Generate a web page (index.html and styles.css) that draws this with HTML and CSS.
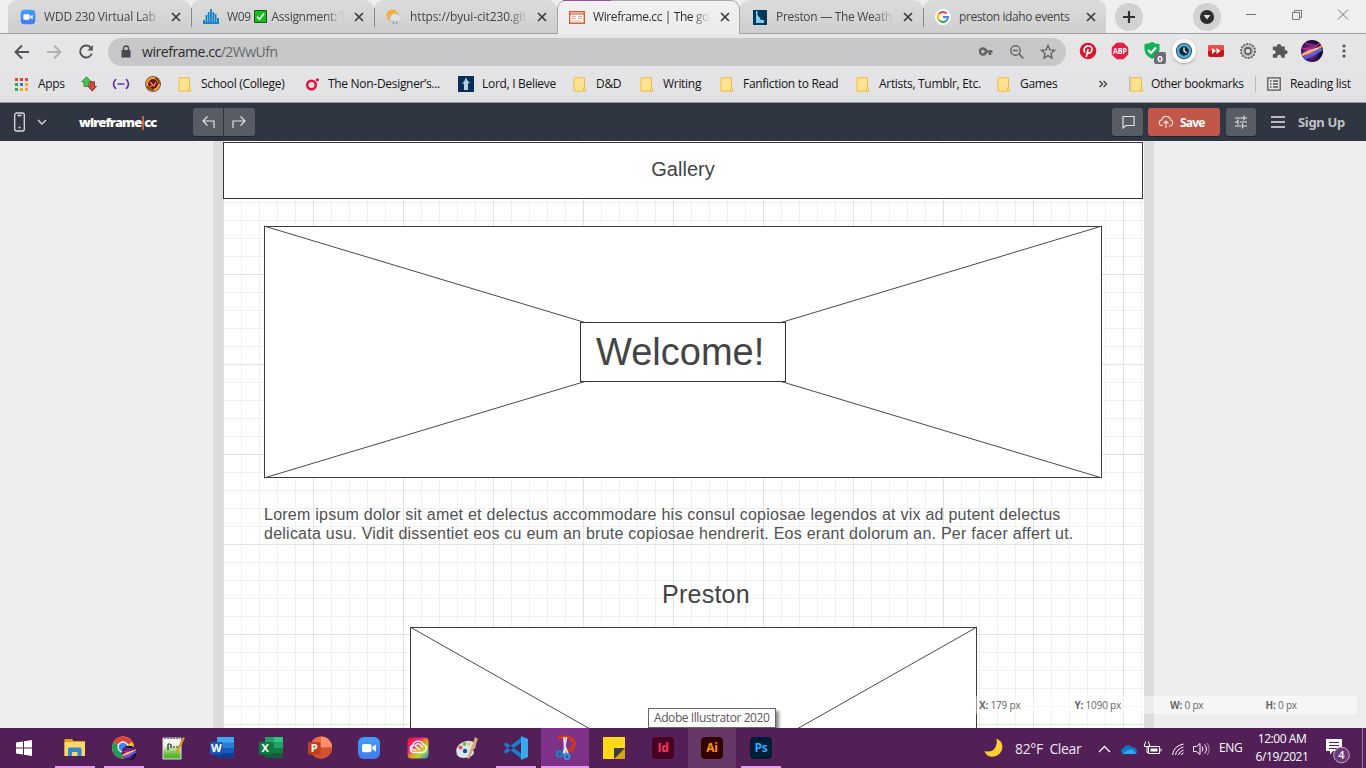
FILE: index.html
```html
<!DOCTYPE html>
<html lang="en">
<head>
<meta charset="utf-8">
<title>Wireframe.cc | The go-to free wireframing tool</title>
<link rel="stylesheet" href="styles.css">
</head>
<body>
<svg class="defs" width="0" height="0">
  <defs>
    <symbol id="x" viewBox="0 0 10 10"><path d="M1 1l8 8M9 1l-8 8" fill="none" stroke="currentColor" stroke-width="1.7"/></symbol>
    <symbol id="folder" viewBox="0 0 14 15"><path d="M1 .8h10.500v9.700l1 .8v2.900H1z" fill="#ffe391" stroke="#e9bd43"/><path d="M10.500 14v-3l1-1.200" fill="none" stroke="#e9bd43"/></symbol>
    <linearGradient id="blue" x2="0" y2="1"><stop stop-color="#3da0fb"/><stop offset="1" stop-color="#4479ed"/></linearGradient>
    <symbol id="zoom" viewBox="0 0 24 24"><rect x="1" y="1" width="22" height="22" rx="6" fill="url(#blue)"/><rect x="5" y="8" width="9.500" height="8.200" rx="1.800" fill="#fff"/><path d="M15.500 10.800L19 8.500v7.200l-3.500-2.400z" fill="#fff"/></symbol>
    <radialGradient id="orb" cx=".4" cy=".55"><stop stop-color="#f5b4a0"/><stop offset=".3" stop-color="#b03058"/><stop offset=".7" stop-color="#421a6c"/><stop offset="1" stop-color="#150b30"/></radialGradient>
    <symbol id="avatar" viewBox="0 0 22 22"><circle cx="11" cy="11" r="11" fill="url(#orb)"/><path d="M1 15Q10 13 21 6" stroke="#fb8b45" stroke-width="2.500" fill="none"/><path d="M3 18Q12 15 21 9" stroke="#4d62ed" stroke-width="3" fill="none"/><path d="M4 3Q12 6 16 5M1 8Q10 11 19 3" stroke="#b22fa2" stroke-width="1.200" fill="none"/><path d="M2 14Q10 10 17 8" stroke="#ffeade" stroke-width="1.300" fill="none"/></symbol>
    <linearGradient id="rainbow" x2="1" y2="1"><stop stop-color="#e8122a"/><stop offset=".35" stop-color="#ee2882"/><stop offset=".5" stop-color="#f08a24"/><stop offset=".7" stop-color="#b9d92b"/><stop offset="1" stop-color="#2986df"/></linearGradient>
    <linearGradient id="npp" x2="0" y2="1"><stop stop-color="#fff"/><stop offset=".35" stop-color="#eef7df"/><stop offset=".8" stop-color="#5dbb2e"/><stop offset="1" stop-color="#4db12c"/></linearGradient>
  </defs>
</svg>

<header class="browser">
  <div class="tabs">
    <div class="tab"><svg class="fav"><use href="#zoom"/></svg><span class="title t1">WDD 230 Virtual Lab -</span><svg class="close"><use href="#x"/></svg></div>
    <div class="tab line"><svg class="fav" viewBox="0 0 16 16"><path d="M0 15V11h2v4zM2.500 15V6h1.800v9zM4.800 15V3h1.800v12zM7.100 15V0h1.800v15zM9.400 15V3h1.800v12zM11.700 15V5h1.800v10zM14 15V9h2v6z" fill="#1a82c7"/><path d="M0 13h16v2H0z" fill="#1a82c7"/></svg><span class="title t2">W09 <svg class="check" viewBox="0 0 13 13"><path d="M.5.5h12v12H.5z" fill="#17bd1d" stroke="#125c14"/><path d="M3 6.700l2.400 2.500L10 3.500" fill="none" stroke="#fff" stroke-width="1.600"/></svg> Assignment: T</span><svg class="close"><use href="#x"/></svg></div>
    <div class="tab line"><svg class="fav" viewBox="0 0 16 16"><circle cx="6.500" cy="6.500" r="5" fill="#fbb53d" stroke="#f6a421" stroke-dasharray="2 1" stroke-width="2"/><path d="M5 12a3 3 0 010-5 4 4 0 017-1 3.200 3.200 0 012 6z" fill="#dfe3e6" stroke="#a9b2bb" stroke-width=".5"/><path d="M8 13l-1 2M11 13l-1 2" stroke="#4991c4"/></svg><span class="title t3">https://byui-cit230.gith</span><svg class="close"><use href="#x"/></svg></div>
    <div class="tab active"><svg class="fav" viewBox="0 0 16 16"><path d="M.7 2.700h14.600v11.600H.7z" fill="#fff" stroke="#df5a34" stroke-width="1.400"/><path d="M1 5h14" stroke="#df5a34" stroke-width="1.200"/><path d="M3 7.500h4M3 9.500h4M3 12h9M9 7.500h4M9 9.500h4" stroke="#efa98f"/></svg><span class="title t4">Wireframe.cc | The go-</span><svg class="close"><use href="#x"/></svg></div>
    <div class="tab"><svg class="fav" viewBox="0 0 16 16"><path d="M1 1h14v15H1z" fill="#06365c"/><path d="M4 2h1.500v4L7.500 8.500 9 11h3v3H4z" fill="#7bd2ec"/></svg><span class="title t5">Preston — The Weathe</span><svg class="close"><use href="#x"/></svg></div>
    <div class="tab line"><svg class="fav" viewBox="0 0 16 16"><circle cx="8" cy="8" r="8" fill="#fff"/><g fill="none" stroke-width="2"><path d="M11.600 4.600A5 5 0 004 5" stroke="#ea4335"/><path d="M4 5a5 5 0 000 6" stroke="#fbbc05"/><path d="M4 11a5 5 0 007.300.700" stroke="#34a853"/><path d="M11.300 11.700A5 5 0 0013 8H8" stroke="#4285f4"/></g></svg><span class="title t6">preston idaho events</span><svg class="close"><use href="#x"/></svg></div>
    <svg class="newtab" viewBox="0 0 28 28"><circle cx="14" cy="14" r="14" fill="#d1d1d2"/><path d="M14 8v12M8 14h12" stroke="#303030" stroke-width="2.200"/></svg>
    <svg class="search" viewBox="0 0 28 28"><circle cx="14" cy="14" r="14" fill="#d1d1d2"/><circle cx="14" cy="14" r="7" fill="#2b2c2e"/><path d="M10.500 12h7L14 16.500z" fill="#ddd"/></svg>
    <svg class="winctl" viewBox="0 0 104 14"><path d="M0 7.500h10M46.500 5.500h7v7h-7zM48.500 5.500v-2h7v7h-2M92 2.500l10 10M102 2.500l-10 10" fill="none" stroke="#777"/></svg>
  </div>
  <div class="toolbar">
    <svg class="nav" viewBox="0 0 88 20" fill="none" stroke="#515456" stroke-width="1.900"><path d="M15 10H2M8 3.500L1.500 10 8 16.500"/><path d="M33 10h13M40 3.500l6.500 6.500-6.500 6.500" stroke="#b0b1b3"/><path d="M77 6A6 6 0 1077.800 11.500" /><path d="M78.800 3v5.500h-5.500z" fill="#515456" stroke="none"/></svg>
    <div class="omnibox">
      <svg width="10" height="14" viewBox="0 0 10 14"><path d="M.5 5h9v7.500h-9z" fill="#47494c"/><path d="M2.500 5V3.500a2.500 2.500 0 015 0V5" fill="none" stroke="#47494c" stroke-width="1.400"/></svg>
      <span class="url">wireframe.cc<i>/2WwUfn</i></span>
      <svg class="oicons" viewBox="0 0 80 16" fill="none" stroke="#5f6164"><circle cx="5" cy="7.500" r="3" stroke-width="2.400"/><path d="M8 7.500h6.500M12 7.500v3.500" stroke-width="2.600"/><circle cx="37.500" cy="6.500" r="4.700" stroke-width="1.400"/><path d="M35 6.500h5M41 10l4.500 4.500" stroke-width="1.500"/><path d="M70 1.500l1.900 4.400 4.700.4-3.600 3.100 1.100 4.700-4.100-2.500-4.100 2.500L67 9.400l-3.600-3.100 4.700-.4z" stroke-width="1.300"/></svg>
    </div>
    <div class="exts">
      <svg viewBox="0 0 18 18"><circle cx="9" cy="9" r="8.300" fill="#d9162c"/><path d="M6 10.500C3.500 7 6.500 3.800 9.300 3.900c3 0 4.500 2.300 3.500 4.900-1 2.700-3.500 3-4.200 1.600M9.200 7l-2 8" fill="none" stroke="#fff" stroke-width="1.600"/></svg>
      <svg viewBox="0 0 18 18"><path d="M5.500.7h7L17.300 5.500v7l-4.800 4.800h-7L.7 12.500v-7z" fill="#e61e43"/><text x="9" y="12" text-anchor="middle" fill="#fff" font-size="8.500" font-weight="700" textLength="14" lengthAdjust="spacingAndGlyphs">ABP</text></svg>
      <svg viewBox="0 0 18 18" class="shieldicon"><path d="M9 0q4 2 7.500 2v6q-1 6-7.500 9Q2.500 14 1.500 8V2Q5 2 9 0z" fill="#0fb456"/><path d="M5 8l3 3 5-5.500" fill="none" stroke="#fff" stroke-width="2"/><rect x="11" y="10" width="12" height="12" rx="2" fill="#6c6c7a"/><text x="17" y="19.500" text-anchor="middle" fill="#fff" font-size="9.500" font-weight="700">0</text></svg>
      <svg viewBox="0 0 18 18" class="ring"><circle cx="9" cy="9" r="12" fill="#fff"/><circle cx="9" cy="9" r="6.800" fill="#132635" stroke="#1d303e" stroke-width="2.400"/><circle cx="9" cy="9" r="6" fill="none" stroke="#44b3e4" stroke-width="2.500"/><path d="M9 5.500V9l2.500 2" fill="none" stroke="#fff" stroke-width="1.300"/></svg>
      <svg viewBox="0 0 18 18"><rect x="1" y="3" width="16" height="12" rx="2.500" fill="#c91219"/><path d="M1 9V5q0-2 2-2h12q2 0 2 2v3z" fill="#ec4c4d"/><path d="M5 6l4 3-4 3zM9.500 6l4 3-4 3z" fill="#fff"/></svg>
      <svg viewBox="0 0 18 18"><circle cx="9" cy="9" r="7" fill="#b4b4b4" stroke="#666" stroke-width="2" stroke-dasharray="2 1.100"/><circle cx="9" cy="9" r="5.500" fill="#aaa" stroke="#ddd"/><circle cx="9" cy="9" r="3" fill="#ddd" stroke="#555" stroke-width="1.300"/></svg>
      <svg viewBox="0 0 18 18"><path d="M2 5h4.500a2.300 2.300 0 114.500 0h4v4a2.200 2.200 0 110 4v4h-4a2.200 2.200 0 10-4 0H2v-4a2.200 2.200 0 100-4z" fill="#55585b" transform="translate(-1 0) scale(.92)"/></svg>
      <svg class="ava"><use href="#avatar"/></svg>
      <svg viewBox="0 0 18 18"><g fill="#515355"><circle cx="8" cy="4" r="1.600"/><circle cx="8" cy="9" r="1.600"/><circle cx="8" cy="14" r="1.600"/></g></svg>
    </div>
  </div>
  <nav class="bookmarks">
    <a><svg viewBox="0 0 15 15" class="apps"><path d="M1 1h3v3H1zM6 1h3v3H6zM11 1h3v3h-3z" fill="#df4538"/><path d="M1 6h3v3H1zM1 11h3v3H1z" fill="#37a458"/><path d="M6 6h3v3H6z" fill="#3b78db"/><path d="M11 6h3v3h-3zM6 11h3v3H6zM11 11h3v3h-3z" fill="#eda52a"/></svg><span>Apps</span></a>
    <a><svg viewBox="0 0 16 16"><path d="M5.500.8l4.700 5H8v4.500H3V5.800H.8z" fill="#49c653" stroke="#167c28" stroke-width=".8"/><path d="M9 5.700h4.500v4.500h2l-4.200 5-4.500-5H9z" fill="#d94a44" stroke="#942321" stroke-width=".8"/></svg></a>
    <a><svg viewBox="0 0 18 16" class="wide"><path d="M4 3Q-1 8 4 13M14 3q5 5 0 10M5.500 8h7" fill="none" stroke="#6930a0" stroke-width="1.700"/></svg></a>
    <a><svg viewBox="0 0 16 16"><circle cx="8" cy="8" r="7.800" fill="#2c150b"/><circle cx="8" cy="8" r="6" fill="none" stroke="#eda32f" stroke-width="2.600"/><circle cx="8" cy="8" r="4.600" fill="#771111"/><path d="M2 10q2 4 7 4M10 2q4 1 4 6" stroke="#7b3c10" stroke-width="1.500" fill="none"/><path d="M5 6l4 4 2-4M5 11l3-2" stroke="#d98b80" stroke-width="1.300" fill="none"/></svg></a>
    <a><svg class="f"><use href="#folder"/></svg><span>School (College)</span></a>
    <a><svg viewBox="0 0 16 16"><circle cx="6.500" cy="9" r="4.300" fill="none" stroke="#dc143c" stroke-width="2.500"/><circle cx="12.500" cy="3.800" r="1.600" fill="#dc143c"/></svg><span class="non">The Non-Designer’s...</span></a>
    <a><svg viewBox="0 0 16 16"><path d="M0 0h16v16H0z" fill="#0a2e57"/><path d="M8 2q1 0 1 2l3 3-2 .500V14H6V7.500L4 8l3-4q0-2 1-2z" fill="#b6d0e2"/></svg><span>Lord, I Believe</span></a>
    <a><svg class="f"><use href="#folder"/></svg><span>D&amp;D</span></a>
    <a><svg class="f"><use href="#folder"/></svg><span>Writing</span></a>
    <a><svg class="f"><use href="#folder"/></svg><span>Fanfiction to Read</span></a>
    <a><svg class="f"><use href="#folder"/></svg><span>Artists, Tumblr, Etc.</span></a>
    <a><svg class="f"><use href="#folder"/></svg><span>Games</span></a>
    <a><svg width="10" height="10" viewBox="0 0 10 10"><path d="M1.500 2l3 3-3 3M5.500 2l3 3-3 3" fill="none" stroke="#444" stroke-width="1.400"/></svg></a>
    <a class="sep"><svg class="f"><use href="#folder"/></svg><span class="other">Other bookmarks</span></a>
    <a class="sep read"><svg viewBox="0 0 14 14" class="rl"><path d="M.8.800h12.400v12.400H.8zM3 4h1.500M3 7h1.500M3 10h1.500M6 4h5M6 7h5M6 10h5" fill="none" stroke="#535659" stroke-width="1.300"/></svg><span>Reading list</span></a>
  </nav>
</header>

<div class="appbar">
  <svg class="phone" viewBox="0 0 36 20" fill="none" stroke="#dcdde0"><rect x="1.700" y="1" width="9.600" height="18" rx="2" stroke-width="1.300"/><path d="M4.500 3.500h4M5.500 15.500h2" stroke-width="1.400"/><path d="M25 8l4 4 4-4" stroke-width="1.300"/></svg>
  <span class="logo">wireframe<b></b>cc</span>
  <div class="undo">
    <svg viewBox="0 0 30 28"><path d="M21 20v-7H10M14.500 8.500L10 13l4.500 4.500" /></svg>
    <svg viewBox="0 0 30 28"><path d="M8.500 20v-7H20M16 8.500l4.500 4.500-4.500 4.500"/></svg>
  </div>
  <svg class="btn chat" viewBox="0 0 30 28"><path d="M10.500 8.500h11v9h-8l-3 2.500z"/></svg>
  <div class="save"><svg viewBox="0 0 16 14" fill="none" stroke="#ffe3dd" stroke-width="1.100"><path d="M5 10.500H3.500A2.800 2.800 0 013.700 5a4.600 4.600 0 018.900-.3A3.300 3.300 0 0112 11h-1.200M8 13V6.500M5.500 8.500L8 6l2.500 2.500"/></svg><span>Save</span></div>
  <svg class="btn settings" viewBox="0 0 30 28"><path d="M9 10h12M9 14h3M14 14h7M9 18h6M17 18h4M18 7.500v5M12 11.500v5M16.500 15.500v5"/></svg>
  <svg class="menu" viewBox="0 0 14 12"><path d="M0 1h14M0 6h14M0 11h14" stroke="#e8e8ea" stroke-width="1.400"/></svg>
  <span class="signup">Sign Up</span>
</div>

<main class="workspace">
  <div class="sheet">
    <div class="node gallery">Gallery</div>
    <svg class="node hero" viewBox="0 0 838 252"><rect x=".5" y=".5" width="837" height="251"/><path d="M0 0l838 252M838 0L0 252"/></svg>
    <div class="node welcome">Welcome!</div>
    <p class="node para"><span>Lorem ipsum dolor sit amet et delectus accommodare his consul copiosae legendos at vix ad putent delectus</span><br><span>delicata usu. Vidit dissentiet eos cu eum an brute copiosae hendrerit. Eos erant dolorum an. Per facer affert ut.</span></p>
    <div class="node preston">Preston</div>
    <svg class="node photo" viewBox="0 0 567 321"><rect x=".5" y=".5" width="566" height="320"/><path d="M0 0l567 321M567 0L0 321"/></svg>
  </div>
  <div class="status"><span><b>X:</b> 179 px</span><span><b>Y:</b> 1090 px</span><span><b>W:</b> 0 px</span><span><b>H:</b> 0 px</span></div>
  <div class="tooltip"><span>Adobe Illustrator 2020</span></div>
</main>

<footer class="taskbar">
  <div class="apps-row">
    <div class="task first"><svg viewBox="0 0 24 24"><path d="M4 6.500l7-1v6H4zM12 5.300L20 4v7.500h-8zM4 12.500h7v6l-7-1zM12 12.500h8V20l-8-1.200z" fill="#fff"/></svg></div>
    <div class="task run"><svg viewBox="0 0 24 24"><path d="M1.500 3H9l1.500 2H22v15H1.500z" fill="#e9a21f"/><path d="M1.500 6H22v14H1.500z" fill="#ffd668"/><path d="M5 20v-7q0-1.500 1.500-1.500h10.500q1.500 0 1.500 1.500v7h-4v-4h-5.500v4z" fill="#2d8ccf"/></svg></div>
    <div class="task run"><svg viewBox="0 0 24 24"><circle cx="11" cy="11.500" r="11" fill="#f7c830"/><path d="M11 11.500L1.500 6A11 11 0 0120.500 6z" fill="#dc4437"/><path d="M1.500 6A11 11 0 0010 22.500l4-8z" fill="#239b57"/><circle cx="11" cy="11" r="5" fill="#3f83e8" stroke="#f2f2f2" stroke-width="1.300"/><svg x="9.500" y="9.500" width="15" height="15"><use href="#avatar"/></svg></svg></div>
    <div class="task"><svg viewBox="0 0 24 24"><path d="M2 2h18v21H2z" fill="url(#npp)" stroke="#ddd"/><path d="M3 2h16" stroke="#777" stroke-width="2" stroke-dasharray="2 1"/><path d="M7 8v6M10 8v4M12 11h2M15 11h3M7 8h2" stroke="#222" stroke-width="1.200"/><path d="M22 1l2 1-7 14-2 2v-3z" fill="#d99727"/></svg></div>
    <div class="task"><svg viewBox="0 0 24 24"><path d="M7 1h17v6H7z" fill="#41a5ee"/><path d="M7 6.500h17V12H7z" fill="#2b7cd3"/><path d="M7 12h17v5H7z" fill="#185abd"/><path d="M7 17h17v5H7z" fill="#103f91"/><rect y="6" width="12.500" height="12.500" rx="1" fill="#185abd"/><text x="6.200" y="15.800">W</text></svg></div>
    <div class="task"><svg viewBox="0 0 24 24"><path d="M6 1h18v21H6z" fill="#107c41"/><path d="M6 1h9v5.500H6z" fill="#21a366"/><path d="M15 1h9v5.500h-9z" fill="#33c481"/><path d="M15 6.500h9V12h-9z" fill="#21a366"/><path d="M6 17h18v5H6z" fill="#185c37"/><rect y="6" width="12.500" height="12.500" rx="1" fill="#107c41"/><text x="6.200" y="15.800">X</text></svg></div>
    <div class="task"><svg viewBox="0 0 24 24"><circle cx="13" cy="11.500" r="11" fill="#ed6c47"/><path d="M13 .500a11 11 0 0111 11H13z" fill="#ff8f6b"/><path d="M2 11.500h22a11 11 0 01-22 0z" fill="#d35230"/><rect y="6" width="12.500" height="12.500" rx="1" fill="#c43e1c"/><text x="6.200" y="15.800">P</text></svg></div>
    <div class="task"><svg><use href="#zoom"/></svg></div>
    <div class="task"><svg viewBox="0 0 24 24"><rect x="1.500" y="1.500" width="21" height="21" rx="4" fill="url(#rainbow)"/><g fill="none" stroke="#fff" stroke-width="1.400"><path d="M7.500 16.500h9a4 4 0 001-7.800A5.600 5.600 0 007 8.800a4 4 0 00.500 7.700z"/><path d="M14 14.300l-4.500-4.300a2.300 2.300 0 10-1.500 4h2.500M9.500 9q3-2.500 5.500.5l2 2.300"/></g></svg></div>
    <div class="task"><svg viewBox="0 0 24 24"><path d="M2 19Q-1 11 7 6.500q9-4 13 1 2 4-2 6l1 3q-1 4-6 5Q5 23 2 19z" fill="#d9e7f0"/><circle cx="5.500" cy="11.500" r="2" fill="#e05844"/><circle cx="9.500" cy="8" r="1.800" fill="#64b548"/><circle cx="14" cy="8" r="1.800" fill="#eec246"/><circle cx="10" cy="15" r="2.200" fill="#1d4b8b"/><path d="M20 1l3 2-2 5-7 15-2-1 6-15z" fill="#d8aa75"/></svg></div>
    <div class="task run"><svg viewBox="0 0 24 24"><path d="M0 8l2-1.500L18 18v5L1 10zM0 16l2 1.500L18 6V1L1 14z" fill="#1581ca"/><path d="M17 0l7 3v18l-7 3z" fill="#36a9ef"/></svg></div>
    <div class="task run current"><svg viewBox="0 0 24 24"><path d="M5 2.500Q14-1 19 3.500T18 14l-4 1" fill="none" stroke="#c9381f" stroke-width="3.500"/><path d="M11 1l1 16M13.500 1l-3 17M12 10l3 8" stroke="#dfe1e8" stroke-width="1.700"/><circle cx="6.500" cy="18" r="2.800" fill="none" stroke="#1382cf" stroke-width="2"/><circle cx="14" cy="20.500" r="2.500" fill="none" stroke="#2c9ce2" stroke-width="2"/></svg></div>
    <div class="task"><svg viewBox="0 0 24 24"><path d="M1 1h22v11l-11 11H1z" fill="#fcd916"/><path d="M23 12v11H12z" fill="#d9a800"/><path d="M12 12h11L12 23z" fill="#3b3b3b"/></svg></div>
    <div class="task adobe id"><b>Id</b></div>
    <div class="task adobe ai"><b>Ai</b></div>
    <div class="task run adobe ps"><b>Ps</b></div>
  </div>
  <div class="tray">
    <svg class="moon" viewBox="0 0 20 20"><path d="M12.500.500q8 4 5.500 11.500Q14 20 6 18.500 2 17.500.5 13q8 2 11-4 2-4 1-8.500z" fill="#ffcf32"/></svg>
    <span class="weather">82°F&nbsp; Clear</span>
    <svg class="trayicons" viewBox="0 0 116 20" fill="none" stroke="#fff"><path d="M1 13l5.500-5.500L12 13" stroke-width="1.300"/><path d="M25 15a3.200 3.200 0 01.5-6 5 5 0 018.500-.5 4 4 0 014 6.500z" fill="#0d78ce" stroke="none"/><path d="M25 15q2-3 7-4.500 4-.5 6 4.500z" fill="#34a8eb" stroke="none"/><path d="M50.500 7.500h11v7h-11zM63 9.500v3M46.500 4.500v3h5v-3M47.500 4.500v-2M50.500 4.500v-2M49 7.500v6h1.500"/><path d="M52.500 9.500h7v3h-7z" fill="#fff" stroke="none"/><path d="M74.500 16Q75.500 7 85.500 5M77.500 16q1-6 8-8M80.500 16q1-3.500 5-5M83.500 16q0-1.500 2-2"/><path d="M95.500 7.500h3l3.500-3v11l-3.500-3h-3zM104 7.500q2 2.500 0 5M106.500 5.500q4 4.500 0 9"/><path d="M109 4q4.500 6 0 12" stroke="#ad91ae"/></svg>
    <span class="eng">ENG</span>
    <div class="clock"><span>12:00 AM</span><span>6/19/2021</span></div>
    <svg class="notif" viewBox="0 0 26 26"><path d="M1 1h16v12H8l-3 3.500V13H1z" fill="#fff"/><path d="M4 4.500h10M4 7.500h10M4 10.500h10" stroke="#522056" stroke-width="1.200"/><circle cx="16.500" cy="17" r="7.800" fill="#6c3974" stroke="#c4a8c8"/><text x="16.500" y="21" text-anchor="middle" fill="#fff" font-size="11" font-weight="600">4</text></svg>
    <i class="desk"></i>
  </div>
</footer>
</body>
</html>
```
FILE: styles.css
```css
* { box-sizing: border-box; }
body { margin: 0; width: 1366px; height: 768px; overflow: hidden; display: flex; flex-direction: column; font: 12px/16px "Open Sans", "Noto Sans", sans-serif; color: #222; }
svg { display: block; flex: none; overflow: visible; }
.defs { position: absolute; }
span { white-space: nowrap; }

.browser { height: 103px; background: linear-gradient(#e9e9ea, #e2e2e4); border-bottom: 1px solid #94959a; flex: none; }
.tabs { height: 34px; display: flex; padding-left: 8px; border-bottom: 1px solid #a0a0a2; background: #efeff0; }
.tab { width: 183px; height: 33px; padding: 0 10px 0 12px; display: flex; align-items: center; background: linear-gradient(#dcdcdd, #cececf); border-radius: 9px 9px 0 0; color: #454545; }
.tab.line { border-image: linear-gradient(transparent 25%, #888 25% 80%, transparent 80%) 1; border-left: 1px solid; padding-left: 11px; }
.tab.active { height: 34px; background: linear-gradient(#f1f1f2, #ebebec); border: 1px solid #a7a7a9; border-bottom: 0; color: #2e2e2e; padding: 0 9px 1px 11px; }
.tab.active::before { content: ""; position: absolute; left: 563px; top: 0; width: 48px; height: 1px; background: #9a4caa; }
.fav { width: 16px; height: 16px; margin-right: 8px; }
.title { flex: 1; min-width: 0; font-size: 12px; letter-spacing: -.15px; -webkit-mask-image: linear-gradient(90deg, #000 82%, transparent 98%); mask-image: linear-gradient(90deg, #000 82%, transparent 98%); }
.t1 { letter-spacing: -.18px; }
.t2 { letter-spacing: -.3px; }
.t3 { letter-spacing: -.12px; }
.t4 { letter-spacing: -.4px; }
.t5 { letter-spacing: -.3px; }
.t6 { letter-spacing: -.4px; -webkit-mask-image: none; mask-image: none; }
.check { display: inline-block; width: 13px; height: 13px; vertical-align: -2px; margin-right: 2px; }
.close { width: 10px; height: 10px; margin-left: 7px; color: #3a3a3a; }
.newtab { width: 28px; height: 28px; margin: 3px 0 0 9px; }
.search { width: 28px; height: 28px; margin: 3px 0 0 50px; }
.winctl { width: 104px; height: 14px; margin: 7px 0 0 25px; }

.toolbar { height: 36px; display: flex; align-items: center; padding-left: 14px; }
.nav { width: 88px; height: 20px; margin-right: 6px; }
.omnibox { width: 958px; height: 28px; border-radius: 14px; background: #c7c7c9; display: flex; align-items: center; padding: 0 8px 0 13px; }
.url { font-size: 14px; line-height: 20px; color: #2a2a2c; margin-left: 11px; flex: 1; letter-spacing: -.5px; }
.url { letter-spacing: -.45px; }
.url i { font-style: normal; color: #66676a; letter-spacing: -.5px; }
.oicons { width: 80px; height: 16px; }
.exts { display: grid; grid-template-columns: repeat(9, 32.1px); padding-left: 5px; width: 294px; }
.exts svg { width: 18px; height: 18px; margin-left: 8px; }
.exts .ava { width: 22px; height: 22px; margin: -2px 0 0 5px; }
.ring circle:first-child { filter: drop-shadow(0 1px 1px #aaa); }

.bookmarks { height: 28px; display: grid; align-items: center; color: #151515; grid-template-columns: 67px 31px 33px 32px 128px 152px 116px 67px 80px 136px 141px 101px 31px 126px 99px; padding-left: 14px; }
.bookmarks a { display: flex; align-items: center; height: 16px; }
.bookmarks svg { width: 16px; height: 16px; margin-right: 8px; }
.bookmarks .apps { width: 15px; height: 15px; margin-right: 9px; }
.bookmarks .wide { width: 18px; }
.bookmarks .f { width: 14px; height: 15px; margin: 0 9px 0 0; }
.bookmarks a:nth-child(5) .f { margin: 0 9px 0 1px; }
.bookmarks a:nth-child(6) svg, .bookmarks .sep .f { margin-right: 7px; }
.bookmarks a:nth-child(7) svg { margin: 0 8px 0 1px; }
.bookmarks span { letter-spacing: -.3px; }
.bookmarks .other { letter-spacing: -.4px; }
.bookmarks a:nth-child(13) svg { width: 10px; height: 10px; }
.bookmarks .sep { border-left: 1px solid #bdbdc0; }
.bookmarks .rl { width: 14px; height: 14px; margin: 0 9px 0 11px; }

.appbar { height: 38px; flex: none; background: #303641; display: flex; align-items: center; color: #fff; padding-left: 13px; font-family: "Noto Sans", sans-serif; }
.phone { width: 36px; height: 20px; }
.logo { margin-left: 30px; width: 114px; font-weight: 800; font-size: 13px; letter-spacing: -.95px; font-family: "Open Sans", sans-serif; display: flex; }
.logo b { width: 2px; height: 14px; background: #d65846; margin: 2px 0 0 1px; }
.undo { display: flex; gap: 1px; }
.undo svg, .btn { width: 31px; height: 28px; background: #585c65; fill: none; stroke: #e2e3e5; stroke-width: 1.200; border-radius: 3px; box-shadow: 0 1px 0 #20242d; }
.undo svg { border-radius: 3px 0 0 3px; width: 30px; }
.undo svg + svg { border-radius: 0 3px 3px 0; width: 31px; }
.chat { margin-left: 857px; }
.save { width: 72px; height: 28px; margin: 0 6px 0 5px; border-radius: 3px; background: #c05748; display: flex; align-items: center; padding-left: 10px; font-weight: 700; font-size: 12px; letter-spacing: -.8px; box-shadow: 0 1px 0 #20242d; }
.save svg { width: 16px; height: 14px; margin-right: 6px; }
.save span { line-height: 18px; padding-top: 1px; }
.btn.settings { width: 30px; }
.menu { width: 14px; height: 12px; margin: 0 13px 0 15px; }
.signup { color: #c0c2c6; font-size: 13px; font-weight: 700; letter-spacing: -.3px; }

.workspace { height: 587px; flex: none; background: #eee; position: relative; overflow: hidden; font-family: "Liberation Sans", Arial, sans-serif; color: #444; }
.sheet { position: relative; width: 941px; height: 587px; margin-left: 213px; border: solid #dcdcdc; border-width: 0 10px; background-color: #fff; background-image: linear-gradient(90deg, #e2e2e2 1px, transparent 1px), linear-gradient(#e2e2e2 1px, transparent 1px), linear-gradient(90deg, #f0f0f0 1px, transparent 1px), linear-gradient(#f0f0f0 1px, transparent 1px); background-size: 90px 90px, 90px 90px, 18px 18px, 18px 18px; background-position: 0 43px, 0 43px, 0 7px, 0 7px; }
.node { position: absolute; margin: 0; white-space: nowrap; }
svg.node { fill: none; stroke: #4a4a4a; }
svg.node rect { fill: #fff; stroke: #3c3c3c; }
.gallery { left: 0; top: 1px; width: 920px; height: 57px; border: 1px solid #333; background: #fff; text-align: center; font-size: 20px; line-height: 53px; }
.hero { left: 41px; top: 85px; width: 838px; height: 252px; }
.welcome { left: 357px; top: 181px; width: 206px; height: 60px; border: 1px solid #333; background: #fff; font-size: 38px; line-height: 59px; padding-left: 15px; }
.para { left: 41px; top: 364px; font-size: 16px; line-height: 19px; letter-spacing: .243px; color: #505050; }
.preston { left: 439px; top: 438px; font-size: 25px; line-height: 30px; letter-spacing: .25px; }
.photo { left: 187px; top: 486px; width: 567px; height: 321px; }
.status { position: absolute; left: 976px; top: 555px; width: 381px; height: 18px; background: rgba(255,255,255,.45); display: grid; grid-template-columns: repeat(4, 95.500px); padding-left: 3px; font: 10px/19px "Open Sans", sans-serif; color: #666; letter-spacing: -.2px; }
.tooltip { position: absolute; left: 648px; top: 567px; width: 128px; height: 20px; border: 1px solid #666; background: #fff; box-shadow: 3px 3px 3px #888; padding-left: 5px; font: 12px/18px "Open Sans", sans-serif; color: #575757; letter-spacing: -.42px; }

.taskbar { height: 40px; flex: none; background: #522056; display: flex; justify-content: space-between; color: #fff; }
.apps-row { display: flex; }
.task { width: 49px; height: 40px; display: grid; place-items: center; padding-right: 1px; }
.task.first { width: 50px; margin-right: 1px; padding-right: 2px; }
.task > svg { width: 24px; height: 24px; }
.task text { font-weight: 700; font-size: 11px; fill: #fff; text-anchor: middle; }
.task.run { background: linear-gradient(#e79be9, #e79be9) 4px 38px / 40px 2px no-repeat; }
.task.current { background: linear-gradient(#e79be9, #e79be9) 0 38px / 48px 2px no-repeat, linear-gradient(#7d3287, #7d3287) 0 0 / 48px 40px no-repeat; }
.adobe b { width: 22px; height: 22px; border-radius: 4px; font-size: 12px; line-height: 21px; text-align: center; letter-spacing: -.3px; }
.id b { background: #49021f; color: #ff3366; }
.ai { background: linear-gradient(#653868, #653868) 0 0 / 48px 40px no-repeat; }
.ai b { background: #330000; color: #ff9a00; }
.ps b { background: #001e36; color: #31a8ff; }
.tray { display: flex; align-items: center; width: 382px; }
.moon { width: 20px; height: 20px; }
.weather { font-size: 14px; margin-left: 10px; width: 84px; letter-spacing: -.35px; color: #eee4ef; padding: 1px 0 0 1px; }
.trayicons { width: 116px; height: 20px; margin-top: 1px; }
.eng { font-size: 12px; margin-left: 5px; width: 35px; letter-spacing: -.4px; }
.clock { width: 56px; text-align: center; display: flex; flex-direction: column; font-size: 12px; line-height: 18px; letter-spacing: -.45px; align-items: center; }
.notif { width: 26px; height: 26px; margin: 5px 0 0 15px; }
.desk { width: 1px; height: 40px; background: #997a9c; margin-left: 11px; }
```
